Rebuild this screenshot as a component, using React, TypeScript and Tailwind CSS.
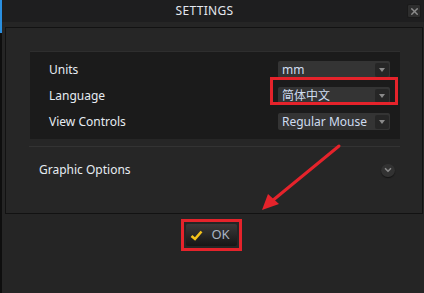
import { ChevronDown, X } from 'lucide-react';

const font = { fontFamily: '"Noto Sans", "Noto Sans CJK SC", sans-serif' };

function SettingRow({ label, value, highlighted }: { label: string; value: string; highlighted?: boolean }) {
  return (
    <div className="flex h-[17px] items-center">
      <div className="flex-1 pl-[19px] text-[12px] text-[#e6ecf2]">{label}</div>
      <div className="relative mr-[10px]">
        <div className="flex h-[17px] w-[112px] items-center rounded-[2px] bg-[#343434] pl-[4px] pr-[1px]">
          <span className="flex-1 text-[12px] leading-none text-[#cfdcf0]">{value}</span>
          <span className="flex h-[14px] w-[14px] items-center justify-center rounded-[2px] bg-[#262626]">
            <span className="h-0 w-0 border-x-[3px] border-t-[4px] border-x-transparent border-t-[#8a8a8a]" />
          </span>
        </div>
        {highlighted && (
          <div className="absolute -left-[8px] -right-[8px] -top-[10px] -bottom-[1px] border-[3px] border-[#e5232b]" />
        )}
      </div>
    </div>
  );
}

export default function App() {
  return (
    <div className="relative flex h-[293px] w-[424px] overflow-hidden bg-[#252525]" style={font}>
      <div className="flex w-[2px] flex-col bg-[#0e0e0e]">
        <div className="h-[33px] w-[2px] bg-[#2a8fe0]" />
      </div>
      <div className="flex flex-1 flex-col">
        <div className="flex h-[22px] items-center bg-[#1e1e1f]">
          <div className="flex-1 text-center text-[12px] tracking-[0.3px] text-[#e4e8ee]">SETTINGS</div>
          <button className="mr-[3px] flex h-[14px] w-[14px] items-center justify-center rounded-[2px] border border-[#1a1a1a] bg-[#2e2e2e]">
            <X size={11} strokeWidth={3} color="#8c8c8c" />
          </button>
        </div>
        <div className="ml-[3px] mr-[1px] mt-[5px] flex h-[187px] flex-col border border-[#121212] bg-[#262626]">
          <div className="ml-[24px] mr-[22px] mt-[23px] flex h-[88px] flex-col gap-[9px] border-t border-[#2e2e2e] bg-[#1b1b1b] pt-[9px]">
            <SettingRow label="Units" value="mm" />
            <SettingRow label="Language" value="简体中文" highlighted />
            <SettingRow label="View Controls" value="Regular Mouse" />
          </div>
          <div className="ml-[23px] mr-[22px] mt-[7px] h-px bg-[#333333]" />
          <div className="mt-[14px] flex items-center pl-[33px] pr-[27px]">
            <span className="flex-1 text-[12px] text-[#e6ecf2]">Graphic Options</span>
            <span className="flex h-[13px] w-[14px] items-center justify-center rounded-full bg-[#323232] shadow-[0_1px_1px_#141414]">
              <ChevronDown size={10} strokeWidth={4} color="#8a8a8a" />
            </span>
          </div>
        </div>
        <div className="mt-[5px] flex justify-center pr-[4px]">
          <div className="border-[3px] border-[#e5232b] p-[2px]">
            <button className="flex h-[22px] w-[51px] items-center justify-center gap-[8px] rounded-[2px] bg-gradient-to-b from-[#3a3a3a] to-[#161616] pr-[2px]">
              <svg width="13" height="11" viewBox="0 0 13 11">
                <path d="M1.5 6 L5 9 L11.5 1.5" fill="none" stroke="#f3c21a" strokeWidth="2.6" />
              </svg>
              <span className="text-[13px] text-[#a9b4c2]">OK</span>
            </button>
          </div>
        </div>
      </div>
      <svg className="pointer-events-none absolute left-0 top-0" width="424" height="293">
        <line x1="339" y1="146" x2="272" y2="201" stroke="#e5232b" strokeWidth="3" strokeLinecap="round" />
        <polygon points="262,210 268,194 279,204" fill="#e5232b" />
      </svg>
    </div>
  );
}
